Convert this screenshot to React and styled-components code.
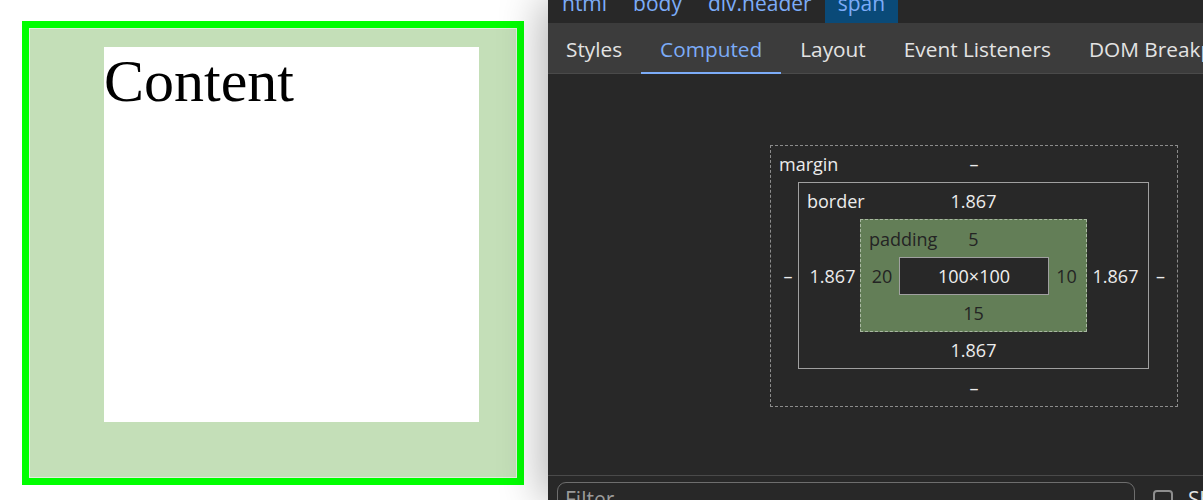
import React from "react";
import styled, { createGlobalStyle } from "styled-components";

const Global = createGlobalStyle`
  html, body { margin: 0; padding: 0; height: 500px; overflow: hidden; background: #fff; }
  #root { height: 500px; }
`;

const Screen = styled.div`
  display: flex;
  width: 1203px;
  height: 500px;
  overflow: hidden;
`;

/* ---------- inspected page ---------- */
const Page = styled.div`
  flex: 0 0 548px;
  box-sizing: border-box;
  background: #fff;
  padding: 21px 0 0 22px;
`;

const HighlightBox = styled.div`
  width: 502px;
  height: 464px;
  box-sizing: border-box;
  border: 7px solid #00ff00;
  background: #c4dfb8;
  box-shadow: inset 0 0 0 1px #e3efdd;
  padding: 19px 38px 56px 75px;
`;

const ContentArea = styled.div`
  width: 375px;
  height: 375px;
  background: #fff;
  color: #000;
  font-family: "Liberation Serif", "Times New Roman", serif;
  font-size: 60px;
  line-height: normal;
`;

/* ---------- devtools ---------- */
const DevTools = styled.div`
  position: relative;
  z-index: 1;
  flex: 0 0 852px;
  height: 500px;
  display: flex;
  flex-direction: column;
  overflow: hidden;
  background: #282828;
  box-shadow: -6px 0 40px rgba(0, 0, 0, 0.3);
  font-family: "Open Sans", "Noto Sans", sans-serif;
`;

const Crumbs = styled.div`
  display: flex;
  flex-shrink: 0;
  height: 35px;
  margin-top: -12px;
  padding-left: 1px;
`;

const Crumb = styled.div`
  height: 35px;
  line-height: 31px;
  padding: 0 13px;
  font-size: 21px;
  white-space: nowrap;
  color: #7cacf8;
  background: ${(p) => (p.$selected ? "#0a4a78" : "transparent")};
`;

const TabBar = styled.div`
  display: flex;
  flex-shrink: 0;
  height: 51px;
  box-sizing: border-box;
  padding-top: 1px;
  margin-left: -1px;
  background: #3c3c3c;
  border-bottom: 1px solid #4a4a4a;
`;

const Tab = styled.div`
  position: relative;
  display: flex;
  align-items: center;
  padding: 0 19px;
  font-size: 20.8px;
  white-space: nowrap;
  color: ${(p) => (p.$active ? "#7cacf8" : "#e3e3e3")};
  &::after {
    content: "";
    display: ${(p) => (p.$active ? "block" : "none")};
    position: absolute;
    left: 0;
    right: 0;
    bottom: -1px;
    height: 2px;
    background: #7cacf8;
  }
`;

const Pane = styled.div`
  flex-shrink: 0;
  height: 401px;
  box-sizing: border-box;
  padding-top: 3px;
  display: flex;
  align-items: center;
  justify-content: center;
`;

const Layer = styled.div`
  display: flex;
  flex-direction: column;
  box-sizing: border-box;
  border: 1px ${(p) => (p.$dashed ? "dashed" : "solid")} ${(p) => p.$line};
  background: ${(p) => p.$bg || "transparent"};
  color: ${(p) => p.$ink};
  font-size: 18px;
  line-height: normal;
`;

const Edge = styled.div`
  position: relative;
  height: ${(p) => p.$h}px;
  display: flex;
  align-items: center;
  justify-content: center;
`;

const Label = styled.span`
  position: absolute;
  left: 8px;
  top: 0;
  bottom: 0;
  display: flex;
  align-items: center;
`;

const Middle = styled.div`
  display: flex;
  align-items: center;
`;

const Side = styled.div`
  width: ${(p) => p.$w}px;
  box-sizing: border-box;
  padding: 0 ${(p) => p.$padR || 0}px 0 ${(p) => p.$padL || 0}px;
  text-align: center;
`;

const ContentBox = styled.div`
  width: 150px;
  height: 38px;
  box-sizing: border-box;
  border: 1px solid #a0a0a0;
  background: #282828;
  color: #f0f0f0;
  display: flex;
  align-items: center;
  justify-content: center;
`;

const FilterBar = styled.div`
  flex: 1;
  display: flex;
  align-items: flex-start;
  border-top: 1px solid #4a4a4a;
  padding: 6px 0 0 9px;
`;

const FilterInput = styled.div`
  flex: 0 0 578px;
  height: 36px;
  box-sizing: border-box;
  border: 1px solid #6e6e6e;
  border-radius: 9px;
  padding: 2px 0 0 7px;
  font-size: 21px;
  color: #9a9a9a;
`;

const Check = styled.div`
  flex: 0 0 20px;
  height: 20px;
  box-sizing: border-box;
  margin: 8px 0 0 18px;
  border: 2px solid #8e8e8e;
  border-radius: 4px;
`;

const CheckLabel = styled.span`
  margin: 3px 0 0 15px;
  font-size: 21px;
  color: #e3e3e3;
  white-space: nowrap;
`;

export default function App() {
  return (
    <>
      <Global />
      <Screen>
        <Page>
          <HighlightBox>
            <ContentArea>Content</ContentArea>
          </HighlightBox>
        </Page>
        <DevTools>
          <Crumbs>
            <Crumb>html</Crumb>
            <Crumb>body</Crumb>
            <Crumb>div.header</Crumb>
            <Crumb $selected>span</Crumb>
          </Crumbs>
          <TabBar>
            <Tab>Styles</Tab>
            <Tab $active>Computed</Tab>
            <Tab>Layout</Tab>
            <Tab>Event Listeners</Tab>
            <Tab>DOM Breakpoints</Tab>
            <Tab>Properties</Tab>
          </TabBar>
          <Pane>
            <Layer $dashed $line="#8c8c8c" $ink="#ececec">
              <Edge $h={36}>
                <Label>margin</Label>–
              </Edge>
              <Middle>
                <Side $w={27} $padL={7}>–</Side>
                <Layer $line="#a0a0a0" $ink="#ececec">
                  <Edge $h={36}>
                    <Label>border</Label>1.867
                  </Edge>
                  <Middle>
                    <Side $w={61} $padL={6}>1.867</Side>
                    <Layer $dashed $line="#a9b8a2" $bg="#637e57" $ink="#242424">
                      <Edge $h={37}>
                        <Label>padding</Label>5
                      </Edge>
                      <Middle>
                        <Side $w={38} $padL={4}>20</Side>
                        <ContentBox>100×100</ContentBox>
                        <Side $w={37} $padR={2}>10</Side>
                      </Middle>
                      <Edge $h={36}>15</Edge>
                    </Layer>
                    <Side $w={61} $padR={4}>1.867</Side>
                  </Middle>
                  <Edge $h={36}>1.867</Edge>
                </Layer>
                <Side $w={28} $padR={5}>–</Side>
              </Middle>
              <Edge $h={37}>–</Edge>
            </Layer>
          </Pane>
          <FilterBar>
            <FilterInput>Filter</FilterInput>
            <Check />
            <CheckLabel>Show all</CheckLabel>
          </FilterBar>
        </DevTools>
      </Screen>
    </>
  );
}
